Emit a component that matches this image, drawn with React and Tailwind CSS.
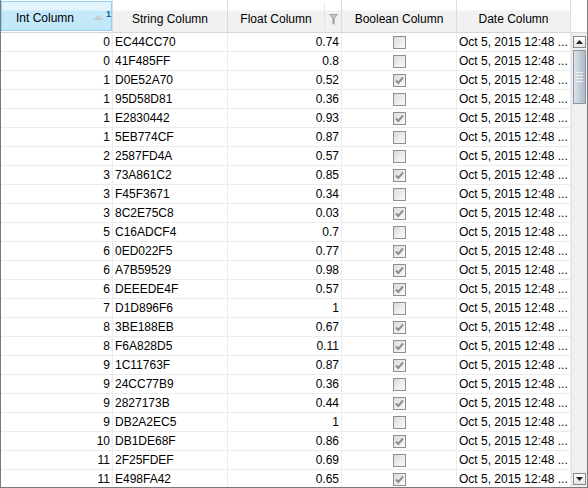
import React from "react";

const rows = [
  [0, "EC44CC70", "0.74", false],
  [0, "41F485FF", "0.8", false],
  [1, "D0E52A70", "0.52", true],
  [1, "95D58D81", "0.36", false],
  [1, "E2830442", "0.93", true],
  [1, "5EB774CF", "0.87", false],
  [2, "2587FD4A", "0.57", false],
  [3, "73A861C2", "0.85", true],
  [3, "F45F3671", "0.34", false],
  [3, "8C2E75C8", "0.03", true],
  [5, "C16ADCF4", "0.7", false],
  [6, "0ED022F5", "0.77", true],
  [6, "A7B59529", "0.98", true],
  [6, "DEEEDE4F", "0.57", true],
  [7, "D1D896F6", "1", false],
  [8, "3BE188EB", "0.67", true],
  [8, "F6A828D5", "0.11", true],
  [9, "1C11763F", "0.87", true],
  [9, "24CC77B9", "0.36", false],
  [9, "2827173B", "0.44", true],
  [9, "DB2A2EC5", "1", false],
  [10, "DB1DE68F", "0.86", true],
  [11, "2F25FDEF", "0.69", false],
  [11, "E498FA42", "0.65", true],
];

function Checkbox({ checked }) {
  return (
    <div className="w-[13px] h-[13px] border border-[#8f8f8f] bg-gradient-to-br from-[#dcdcdc] to-[#fbfbfb] flex items-center justify-center">
      {checked && (
        <svg width="11" height="11" viewBox="0 0 11 11">
          <path d="M2 5.5 L4.3 8 L9 2.5" fill="none" stroke="#8a8f96" strokeWidth="2" />
        </svg>
      )}
    </div>
  );
}

function HeaderCell({ children, className = "" }) {
  return (
    <div
      className={
        "h-full flex items-center justify-center pt-[6px] border-r border-[#dcdcdc] bg-[linear-gradient(#ffffff_0px,#ffffff_10px,#f1f1f1_11px,#f1f1f1_100%)] " +
        className
      }
    >
      {children}
    </div>
  );
}

export default function App() {
  return (
    <div
      className="w-[588px] h-[488px] bg-white border-l border-r border-b border-[#7a7a7a] flex flex-col overflow-hidden text-[12px] text-black"
      style={{ fontFamily: '"Liberation Sans", Arial, sans-serif' }}
    >
      {/* header */}
      <div className="h-[33px] shrink-0 flex border-b border-[#d8d8d8]">
        <div className="w-[112px] h-full pt-[1px] pb-[1px] shrink-0 border-r border-[#dcdcdc]">
          <div className="h-full flex border border-[#8fd0f3] bg-[linear-gradient(#e2f4fc_0px,#e2f4fc_8px,#c3e8fa_9px,#c3e8fa_100%)] relative">
            <div className="w-[86px] flex items-center justify-center pt-[4px]">Int Column</div>
            <svg className="absolute left-[91px] top-[13px]" width="10" height="5" viewBox="0 0 10 5">
              <path d="M0 5 L5 0 L10 5 Z" fill="#c6cbcf" />
            </svg>
            <span className="absolute left-[104px] top-[8px] text-[9px] font-bold text-[#1d5e95] leading-none">1</span>
          </div>
        </div>
        <HeaderCell className="w-[115px]">String Column</HeaderCell>
        <div className="w-[114px] h-full flex border-r border-[#dcdcdc] bg-[linear-gradient(#ffffff_0px,#ffffff_10px,#f1f1f1_11px,#f1f1f1_100%)]">
          <div className="w-[96px] flex items-center justify-center pt-[6px]">Float Column</div>
          <div className="flex-1 flex items-center justify-center border-l border-[#e4e4e4] mt-[4px] mb-[1px] pt-[4px]">
            <svg width="9" height="11" viewBox="0 0 9 11">
              <path d="M0 0 H9 L5.5 4.5 V11 L3.5 9.5 V4.5 Z" fill="#9a9a9a" />
              <path d="M1.5 0.8 H7.5 L5 4 H4 Z" fill="#c8c8c8" />
            </svg>
          </div>
        </div>
        <HeaderCell className="w-[115px]">Boolean Column</HeaderCell>
        <HeaderCell className="w-[114px]">Date Column</HeaderCell>
        <div className="flex-1 h-full bg-white" />
      </div>

      {/* body */}
      <div className="flex-1 flex min-h-0">
        <div className="flex flex-col overflow-hidden">
          {rows.map((r, i) => (
            <div key={i} className="h-[19px] shrink-0 flex border-b border-[#ececec]">
              <div className="w-[112px] shrink-0 flex items-center justify-end pr-[2px] border-r border-[#ececec]">
                {r[0]}
              </div>
              <div className="w-[115px] shrink-0 flex items-center pl-[2px] border-r border-[#ececec]">
                {r[1]}
              </div>
              <div className="w-[114px] shrink-0 flex items-center justify-end pr-[2px] border-r border-[#ececec]">
                {r[2]}
              </div>
              <div className="w-[115px] shrink-0 flex items-center justify-center border-r border-[#ececec]">
                <Checkbox checked={r[3]} />
              </div>
              <div className="w-[114px] shrink-0 flex items-center pl-[2px] border-r border-[#ececec] whitespace-nowrap overflow-hidden">
                Oct 5, 2015 12:48 ...
              </div>
            </div>
          ))}
        </div>
        {/* scrollbar */}
        <div className="w-[16px] shrink-0 flex flex-col bg-[#f0f0f0] border-l border-[#e4e4e4] pt-[3px] pb-[2px] px-[1px]">
          <div className="h-[12px] border border-[#8a8a8a] bg-gradient-to-b from-[#ffffff] to-[#e4e4e4] flex items-center justify-center">
            <svg width="7" height="4" viewBox="0 0 7 4">
              <path d="M0 4 L3.5 0 L7 4 Z" fill="#222" />
            </svg>
          </div>
          <div className="mt-[2px] h-[54px] border border-[#8b96a3] bg-gradient-to-r from-[#dde3e9] via-[#c4cdd6] to-[#aeb9c5] flex flex-col items-center justify-center gap-[2px]">
            <div className="w-[7px] h-[1px] bg-[#eef2f5]" />
            <div className="w-[7px] h-[1px] bg-[#eef2f5]" />
            <div className="w-[7px] h-[1px] bg-[#eef2f5]" />
            <div className="w-[7px] h-[1px] bg-[#eef2f5]" />
          </div>
          <div className="flex-1" />
          <div className="h-[12px] border border-[#8a8a8a] bg-gradient-to-b from-[#ffffff] to-[#e4e4e4] flex items-center justify-center">
            <svg width="7" height="4" viewBox="0 0 7 4">
              <path d="M0 0 L3.5 4 L7 0 Z" fill="#222" />
            </svg>
          </div>
        </div>
      </div>
    </div>
  );
}
